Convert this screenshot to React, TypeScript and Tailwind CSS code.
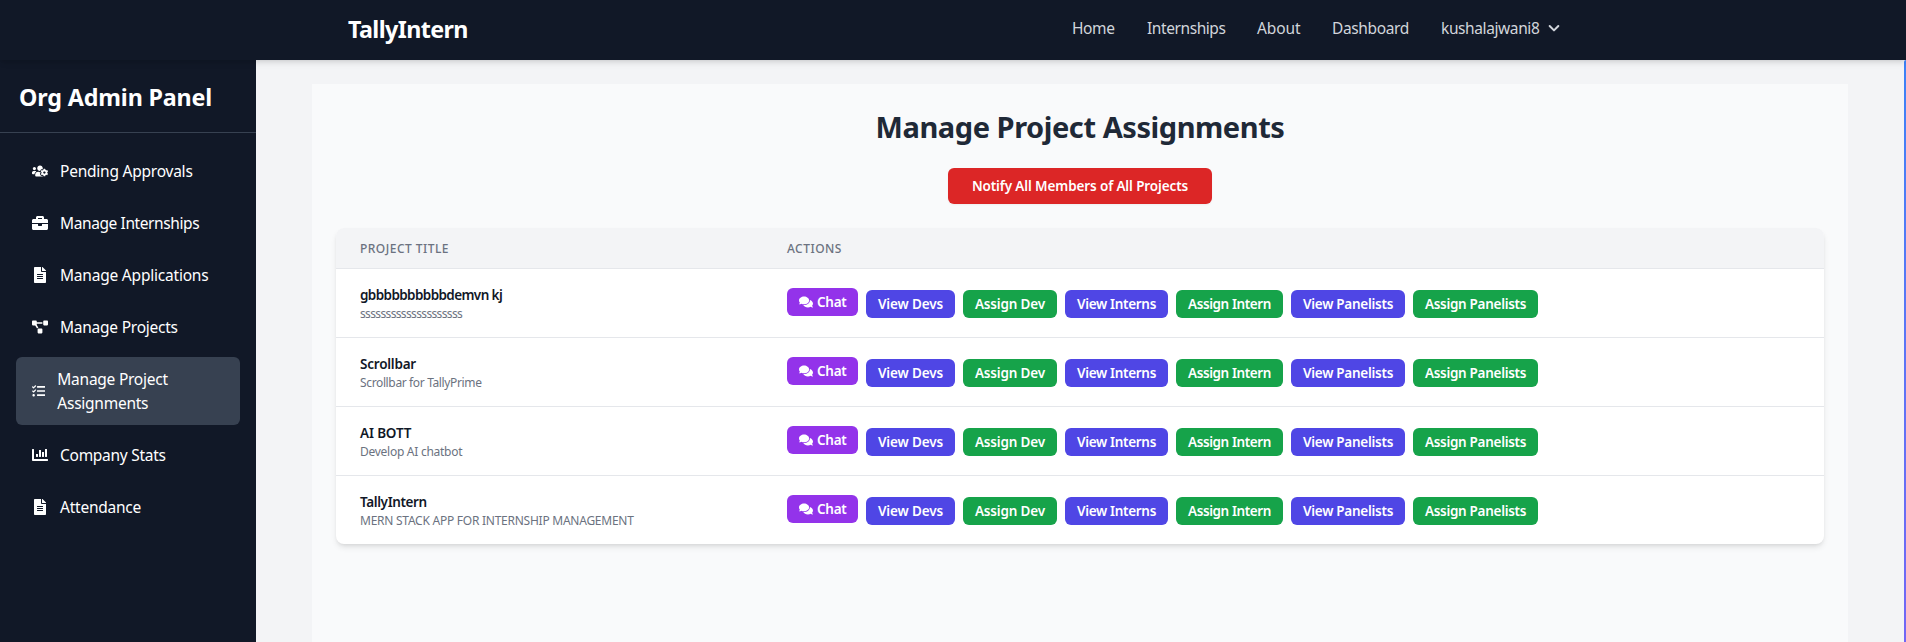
import type { IconType } from "react-icons";
import {
  FaBriefcase,
  FaChartBar,
  FaComments,
  FaFileAlt,
  FaProjectDiagram,
  FaTasks,
  FaUsersCog,
} from "react-icons/fa";

type NavLink = { label: string; cls: string };
type SideItem = { label: string; icon: IconType; cls: string; active?: boolean };
type Action = { label: string; cls: string };
type Project = { title: string; titleCls: string; description: string; descCls: string };

const navLinks: NavLink[] = [
  { label: "Home", cls: "w-[43px] tracking-[-0.4px]" },
  { label: "Internships", cls: "w-[78px] tracking-[-0.42px]" },
  { label: "About", cls: "w-[43px] tracking-[-0.1px]" },
  { label: "Dashboard", cls: "w-[77px] tracking-[-0.37px]" },
];

const sideItems: SideItem[] = [
  { label: "Pending Approvals", icon: FaUsersCog, cls: "tracking-[-0.23px]" },
  { label: "Manage Internships", icon: FaBriefcase, cls: "tracking-[-0.4px]" },
  { label: "Manage Applications", icon: FaFileAlt, cls: "tracking-[-0.21px]" },
  { label: "Manage Projects", icon: FaProjectDiagram, cls: "tracking-[-0.24px]" },
  { label: "Manage Project Assignments", icon: FaTasks, cls: "tracking-[-0.25px]", active: true },
  { label: "Company Stats", icon: FaChartBar, cls: "tracking-[-0.27px]" },
  { label: "Attendance", icon: FaFileAlt, cls: "tracking-[-0.24px]" },
];

const actions: Action[] = [
  { label: "View Devs", cls: "w-[89px] bg-[#4f46e5] tracking-[-0.13px]" },
  { label: "Assign Dev", cls: "w-[94px] bg-[#16a34a] tracking-[-0.16px]" },
  { label: "View Interns", cls: "w-[103px] bg-[#4f46e5] tracking-[-0.32px]" },
  { label: "Assign Intern", cls: "w-[107px] bg-[#16a34a] tracking-[-0.4px]" },
  { label: "View Panelists", cls: "w-[114px] bg-[#4f46e5] tracking-[-0.27px]" },
  { label: "Assign Panelists", cls: "w-[125px] bg-[#16a34a] tracking-[-0.3px]" },
];

const projects: Project[] = [
  {
    title: "gbbbbbbbbbbdemvn kj",
    titleCls: "tracking-[-0.6px]",
    description: "ssssssssssssssssssss",
    descCls: "tracking-[-0.64px]",
  },
  {
    title: "Scrollbar",
    titleCls: "tracking-[-0.22px]",
    description: "Scrollbar for TallyPrime",
    descCls: "tracking-[-0.36px]",
  },
  {
    title: "AI BOTT",
    titleCls: "tracking-[-0.15px]",
    description: "Develop AI chatbot",
    descCls: "tracking-[-0.27px]",
  },
  {
    title: "TallyIntern",
    titleCls: "tracking-[-0.38px]",
    description: "MERN STACK APP FOR INTERNSHIP MANAGEMENT",
    descCls: "tracking-[-0.25px]",
  },
];

function Navbar() {
  return (
    <header className="relative z-10 h-[60px] shrink-0 bg-[#111827] shadow-[0_4px_6px_-1px_rgba(0,0,0,0.1),0_2px_4px_-2px_rgba(0,0,0,0.1)]">
      <div className="mx-auto flex h-[57px] w-[1214px] items-center justify-between pl-[2px]">
        <a className="text-[23.3px] leading-8 font-bold tracking-[-0.6px] text-white">TallyIntern</a>
        <nav className="-mr-[2px] flex gap-8 pb-[2px] text-[15.5px] leading-6 whitespace-nowrap text-[#d1d5db]">
          {navLinks.map((link) => (
            <a key={link.label} className={link.cls}>
              {link.label}
            </a>
          ))}
          <button className="flex items-center gap-[6px]">
            <span className="w-[99px] text-left tracking-[-0.4px]">kushalajwani8</span>
            <svg className="size-4" viewBox="0 0 24 24" fill="none" stroke="currentColor" strokeWidth="3">
              <path strokeLinecap="round" strokeLinejoin="round" d="M18.5 9l-6.5 6.5-6.5-6.5" />
            </svg>
          </button>
        </nav>
      </div>
    </header>
  );
}

function Sidebar() {
  return (
    <aside className="w-64 shrink-0 bg-[#111827] text-white">
      <div className="h-[73px] border-b border-[#374151] px-5 pt-[21px]">
        <h2 className="-ml-px text-[23.3px] leading-8 font-bold tracking-[-0.16px] whitespace-nowrap">
          Org Admin Panel
        </h2>
      </div>
      <nav className="flex flex-col gap-2 p-4 text-[15.5px] leading-6">
        {sideItems.map(({ label, icon: Icon, cls, active }) => (
          <a
            key={label}
            className={
              active
                ? "flex items-center rounded-md bg-[#374151] px-4 py-[10px]"
                : "flex items-center rounded-md px-4 py-[10px]"
            }
          >
            <Icon className={active ? "mr-3 h-4 w-[13.3px] shrink-0" : "mr-3 size-4 shrink-0"} />
            <span className={cls}>{label}</span>
          </a>
        ))}
      </nav>
    </aside>
  );
}

function ProjectTable() {
  return (
    <div className="overflow-hidden rounded-lg bg-white shadow-[0_4px_6px_-1px_rgba(0,0,0,0.1),0_2px_4px_-2px_rgba(0,0,0,0.1)]">
      <div className="grid h-10 grid-cols-[427px_1fr] bg-[#f3f4f6] px-6 pt-[13px] text-[12px] leading-4 font-medium tracking-[0.48px] text-[#6b7280] uppercase">
        <span>Project Title</span>
        <span>Actions</span>
      </div>
      {projects.map((project) => (
        <div key={project.title} className="grid h-[69px] grid-cols-[427px_1fr] border-t border-[#e5e7eb] px-6">
          <div className="pt-4">
            <div className={`text-[13.5px] leading-5 font-semibold text-[#111827] ${project.titleCls}`}>
              {project.title}
            </div>
            <div className={`pt-px text-[12px] leading-4 text-[#6b7280] ${project.descCls}`}>
              {project.description}
            </div>
          </div>
          <div className="flex gap-2 pt-[21px] text-[13.5px] leading-5 font-semibold whitespace-nowrap text-white">
            <button className="-mt-[2px] flex h-7 w-[71px] items-center rounded-md bg-[#9333ea] px-3 tracking-[-0.25px]">
              <FaComments className="mr-1 size-[14px] shrink-0" />
              Chat
            </button>
            {actions.map((action) => (
              <button key={action.label} className={`h-7 rounded-md text-center ${action.cls}`}>
                {action.label}
              </button>
            ))}
          </div>
        </div>
      ))}
    </div>
  );
}

export default function App() {
  return (
    <div className="flex h-[642px] flex-col overflow-hidden bg-[#f3f4f6] font-['Noto_Sans',sans-serif]">
      <Navbar />
      <div className="flex min-h-0 flex-1">
        <Sidebar />
        <main className="flex min-w-0 flex-1 justify-center pt-6">
          <section className="w-[1536px] bg-[#f9fafb] p-6">
            <h1 className="pt-px text-center text-[29px] leading-[35px] font-bold tracking-[-0.44px] text-[#1f2937]">
              Manage Project Assignments
            </h1>
            <div className="mt-6 mb-6 flex justify-center">
              <button className="h-9 w-[264px] rounded-md bg-[#dc2626] text-[13.5px] leading-5 font-semibold tracking-[-0.12px] whitespace-nowrap text-white shadow-[0_1px_2px_rgba(0,0,0,0.05)]">
                Notify All Members of All Projects
              </button>
            </div>
            <ProjectTable />
          </section>
        </main>
        <div className="w-[2px] shrink-0 rounded-tl-[2px] bg-linear-to-b from-[#3b82f6] to-[#7266f4]" />
      </div>
    </div>
  );
}
